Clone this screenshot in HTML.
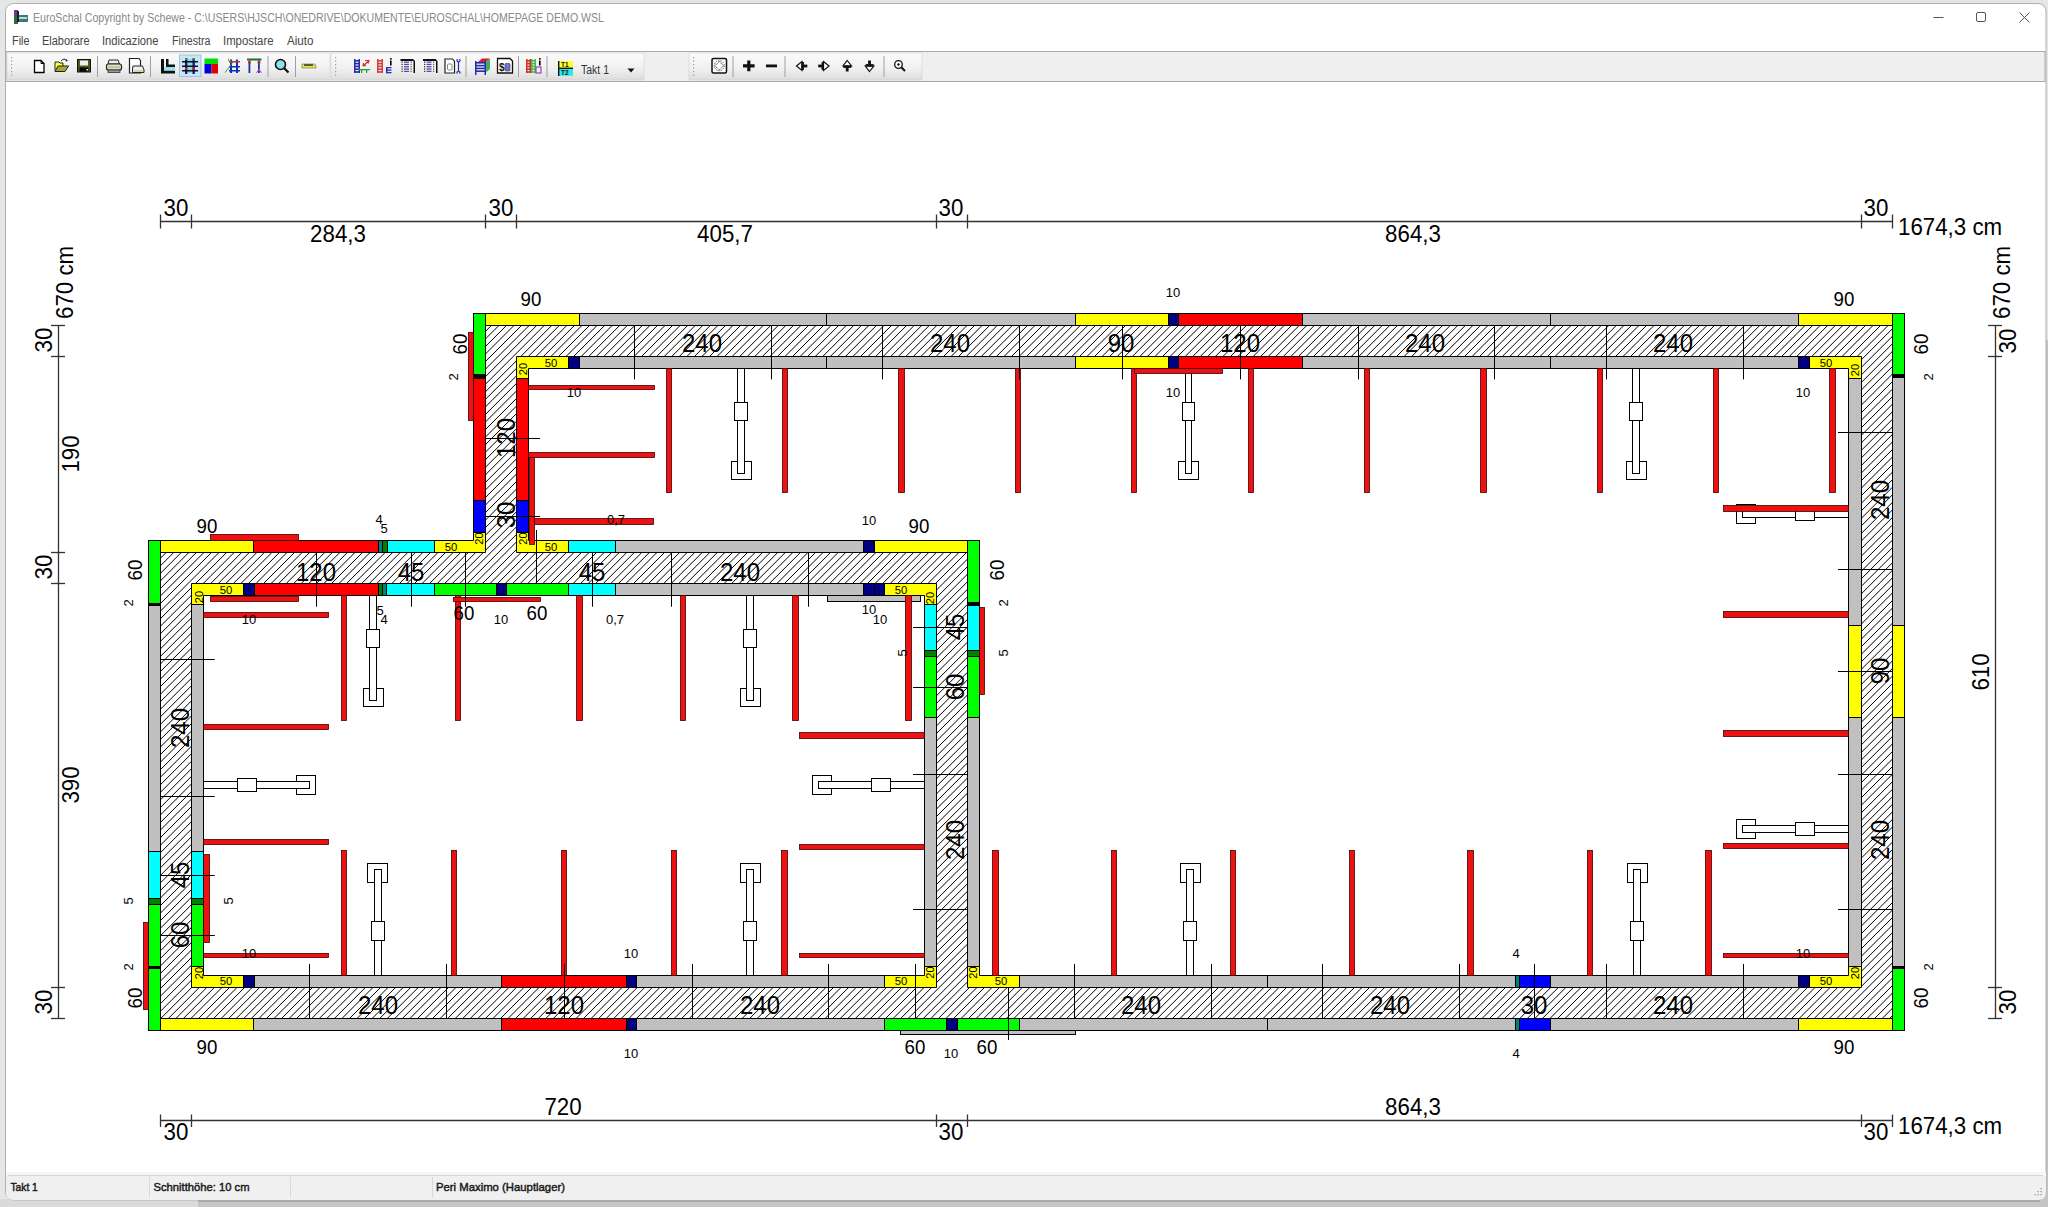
<!DOCTYPE html>
<html><head><meta charset="utf-8"><style>
html,body{margin:0;padding:0;background:#e6e6e6;overflow:hidden;}
svg{display:block;font-family:"Liberation Sans",sans-serif;}
</style></head><body>
<svg width="2048" height="1207" viewBox="0 0 2048 1207">
<defs><pattern id="hatch" patternUnits="userSpaceOnUse" x="1.43" y="0" width="7.55" height="7.55"><rect width="7.55" height="7.55" fill="#fff"/><path d="M-1,8.55 L8.55,-1 M-1,1 L1,-1 M6.55,8.55 L8.55,6.55" stroke="#000" stroke-width="1.05"/></pattern></defs>
<rect x="0" y="0" width="2048" height="1207" fill="#e6e6e6"/><rect x="0" y="1199" width="198" height="8" fill="#dadada"/><rect x="198" y="1199" width="1850" height="8" fill="#c6c6c6"/><rect x="198" y="1200" width="1850" height="2" fill="#a9a9a9"/><rect x="2040" y="340" width="8" height="867" fill="#c4c4c4"/><rect x="5.5" y="3.5" width="2040.5" height="1196.5" rx="8" fill="#ffffff" stroke="#b0b0b0" stroke-width="1"/><rect x="14" y="10" width="4" height="14" fill="#6a3d7a"/><rect x="14" y="16" width="4" height="8" fill="#2e6b3a"/><rect x="18" y="15" width="10" height="7" fill="#3a7a7a"/><rect x="19" y="17" width="8" height="2" fill="#c0d8d8"/><rect x="17" y="11" width="2" height="11" fill="#1a1a3a"/><text x="33" y="21.5" font-size="12.2" fill="#8a8a8a" textLength="571" lengthAdjust="spacingAndGlyphs">EuroSchal Copyright by Schewe - C:\USERS\HJSCH\ONEDRIVE\DOKUMENTE\EUROSCHAL\HOMEPAGE DEMO.WSL</text><line x1="1933.5" y1="17.5" x2="1943.5" y2="17.5" stroke="#555" stroke-width="1"/><rect x="1976.5" y="12.5" width="9" height="9" rx="1.5" fill="none" stroke="#555" stroke-width="1"/><path d="M2019.5,12.5 L2029.5,22.5 M2029.5,12.5 L2019.5,22.5" stroke="#555" stroke-width="1"/><text x="12" y="45" font-size="12" fill="#444" textLength="17.5" lengthAdjust="spacingAndGlyphs">File</text><text x="42" y="45" font-size="12" fill="#444" textLength="47.5" lengthAdjust="spacingAndGlyphs">Elaborare</text><text x="102" y="45" font-size="12" fill="#444" textLength="56.5" lengthAdjust="spacingAndGlyphs">Indicazione</text><text x="172" y="45" font-size="12" fill="#444" textLength="38.5" lengthAdjust="spacingAndGlyphs">Finestra</text><text x="223" y="45" font-size="12" fill="#444" textLength="50.5" lengthAdjust="spacingAndGlyphs">Impostare</text><text x="287" y="45" font-size="12" fill="#444" textLength="26.5" lengthAdjust="spacingAndGlyphs">Aiuto</text><rect x="6" y="51.5" width="2039" height="30" fill="#efefef" stroke="#a9a9a9" stroke-width="1"/><defs><linearGradient id="tbg" x1="0" y1="0" x2="0" y2="1"><stop offset="0" stop-color="#fbfbfb"/><stop offset="0.6" stop-color="#f0f0f0"/><stop offset="1" stop-color="#dcdcdc"/></linearGradient></defs><rect x="7" y="53" width="323" height="27" fill="url(#tbg)" stroke="#d0d0d0" stroke-width="0.6"/><rect x="11" y="57.0" width="1.2" height="1.2" fill="#9a9a9a"/><rect x="11" y="60.5" width="1.2" height="1.2" fill="#9a9a9a"/><rect x="11" y="64.0" width="1.2" height="1.2" fill="#9a9a9a"/><rect x="11" y="67.5" width="1.2" height="1.2" fill="#9a9a9a"/><rect x="11" y="71.0" width="1.2" height="1.2" fill="#9a9a9a"/><rect x="11" y="74.5" width="1.2" height="1.2" fill="#9a9a9a"/><rect x="331" y="53" width="313" height="27" fill="url(#tbg)" stroke="#d0d0d0" stroke-width="0.6"/><rect x="335" y="57.0" width="1.2" height="1.2" fill="#9a9a9a"/><rect x="335" y="60.5" width="1.2" height="1.2" fill="#9a9a9a"/><rect x="335" y="64.0" width="1.2" height="1.2" fill="#9a9a9a"/><rect x="335" y="67.5" width="1.2" height="1.2" fill="#9a9a9a"/><rect x="335" y="71.0" width="1.2" height="1.2" fill="#9a9a9a"/><rect x="335" y="74.5" width="1.2" height="1.2" fill="#9a9a9a"/><rect x="689" y="53" width="233" height="27" fill="url(#tbg)" stroke="#d0d0d0" stroke-width="0.6"/><rect x="693" y="57.0" width="1.2" height="1.2" fill="#9a9a9a"/><rect x="693" y="60.5" width="1.2" height="1.2" fill="#9a9a9a"/><rect x="693" y="64.0" width="1.2" height="1.2" fill="#9a9a9a"/><rect x="693" y="67.5" width="1.2" height="1.2" fill="#9a9a9a"/><rect x="693" y="71.0" width="1.2" height="1.2" fill="#9a9a9a"/><rect x="693" y="74.5" width="1.2" height="1.2" fill="#9a9a9a"/><line x1="97.5" y1="56" x2="97.5" y2="77" stroke="#a0a0a0" stroke-width="1"/><line x1="150.5" y1="56" x2="150.5" y2="77" stroke="#a0a0a0" stroke-width="1"/><line x1="268" y1="56" x2="268" y2="77" stroke="#a0a0a0" stroke-width="1"/><line x1="295.5" y1="56" x2="295.5" y2="77" stroke="#a0a0a0" stroke-width="1"/><line x1="466" y1="56" x2="466" y2="77" stroke="#a0a0a0" stroke-width="1"/><line x1="518.5" y1="56" x2="518.5" y2="77" stroke="#a0a0a0" stroke-width="1"/><line x1="547" y1="56" x2="547" y2="77" stroke="#a0a0a0" stroke-width="1"/><line x1="733" y1="56" x2="733" y2="77" stroke="#a0a0a0" stroke-width="1"/><line x1="785" y1="56" x2="785" y2="77" stroke="#a0a0a0" stroke-width="1"/><line x1="884" y1="56" x2="884" y2="77" stroke="#a0a0a0" stroke-width="1"/><rect x="179.5" y="55" width="21.5" height="21.5" fill="#cce4f7" stroke="#99c2e6" stroke-width="1"/><path d="M34.5,60.5 H41 L44,63.5 V72.5 H34.5 Z" fill="#fff" stroke="#000" stroke-width="1.3"/><path d="M41,60.5 V63.5 H44" fill="none" stroke="#000" stroke-width="1"/><path d="M55,62 H59 L60,63 H63 V70.5 H55 Z" fill="#ffff40" stroke="#222" stroke-width="1"/><path d="M55,71.5 L58,66 H68.5 L65,71.5 Z" fill="#a8a830" stroke="#222" stroke-width="1"/><path d="M61,61 Q64,57.5 67,60.5" fill="none" stroke="#222" stroke-width="1"/><path d="M66,59 L68,61 L65.5,61.5Z" fill="#222"/><rect x="77.5" y="59.5" width="13" height="12.5" fill="#555520" stroke="#111" stroke-width="1"/><rect x="80" y="60.5" width="8" height="5" fill="#eee"/><rect x="79.5" y="67.5" width="9" height="4" fill="#000"/><rect x="86.5" y="69" width="1.5" height="1.5" fill="#fff"/><path d="M109,60 H118 L119.5,64 H108Z" fill="#eee" stroke="#222" stroke-width="1"/><rect x="106.5" y="64" width="15" height="6" rx="2" fill="#ddd" stroke="#222" stroke-width="1.2"/><rect x="108" y="66.5" width="12" height="1.2" fill="#b8c040"/><rect x="108" y="70" width="12" height="2.5" fill="#999" stroke="#333" stroke-width="0.8"/><path d="M129.5,58.5 H139 L140.5,60.5 V73 H129.5 Z" fill="#fff" stroke="#222" stroke-width="1.2"/><path d="M133,66 H142.5 L144,70 V72.5 H132.5 V69 Z" fill="#eee" stroke="#222" stroke-width="1"/><rect x="134" y="70.5" width="9" height="1" fill="#c0c040"/><path d="M161,59 H164 V70.5 H175 V73.5 H161Z" fill="#111"/><path d="M164,67 H175 V70.5 H164Z" fill="#8ee8ee"/><path d="M166,59 H168.5 V64.5 H175 V67 H166Z" fill="#111"/><rect x="186" y="59" width="9" height="14" fill="#8fd8e8"/><rect x="185" y="58" width="2.3" height="16" fill="#0a1a8a"/><rect x="192.5" y="58" width="2.3" height="16" fill="#0a1a8a"/><rect x="182" y="61" width="16" height="1.5" fill="#111"/><rect x="182" y="65.5" width="16" height="1.5" fill="#111"/><rect x="182" y="70" width="16" height="1.5" fill="#111"/><rect x="185" y="58" width="2.3" height="2" fill="#2a2"/><rect x="192.5" y="58" width="2.3" height="2" fill="#2a2"/><rect x="185" y="67.5" width="2.3" height="2" fill="#c22"/><rect x="192.5" y="67.5" width="2.3" height="2" fill="#c22"/><rect x="204.5" y="58.5" width="13.5" height="5.5" fill="#00e000"/><rect x="204.5" y="64" width="7" height="9.5" fill="#0000e0"/><rect x="211.5" y="64" width="6.5" height="9.5" fill="#e00000"/><rect x="230" y="59.5" width="2" height="13.5" fill="#1030b0"/><rect x="236" y="59.5" width="2" height="13.5" fill="#1030b0"/><rect x="229" y="61" width="11" height="1.5" fill="#c03030"/><rect x="229" y="66" width="11" height="1.5" fill="#1030b0"/><rect x="229" y="70" width="11" height="1.5" fill="#1030b0"/><path d="M225,72.5 L233,62" stroke="#40a040" stroke-width="1"/><path d="M228.5,58.5 V61 H231" fill="none" stroke="#40c040" stroke-width="0.9"/><rect x="247" y="58.5" width="14.5" height="2" fill="#207020"/><rect x="248.5" y="60.5" width="1.8" height="12.5" fill="#2030a0"/><rect x="258" y="60.5" width="1.8" height="12.5" fill="#2030a0"/><rect x="248" y="61.5" width="3" height="2" fill="#c03040"/><rect x="257.5" y="61.5" width="3" height="2" fill="#c03040"/><path d="M256.5,73 L259,69 L261.5,73" fill="none" stroke="#c050d0" stroke-width="1"/><circle cx="280.5" cy="64.5" r="5" fill="#90e0e8" stroke="#111" stroke-width="1.6"/><path d="M284,68 L288.5,72.5" stroke="#111" stroke-width="2.2"/><path d="M302,64 H315 L316,66.5 V68 H302Z" fill="#e8e840" stroke="#666" stroke-width="0.6"/><rect x="304" y="64.3" width="9" height="1.5" fill="#333"/><rect x="354" y="59" width="1.5" height="14" fill="#2a2ab0"/><rect x="358.5" y="59" width="1.5" height="14" fill="#2a2ab0"/><rect x="354" y="60.0" width="6" height="1.6" fill="#2a2ab0"/><rect x="354" y="62.8" width="6" height="1.6" fill="#2a2ab0"/><rect x="354" y="65.6" width="6" height="1.6" fill="#2a2ab0"/><rect x="354" y="68.4" width="6" height="1.6" fill="#2a2ab0"/><rect x="354" y="71.2" width="6" height="1.6" fill="#2a2ab0"/><path d="M363,66 L369,60.5 M365,60.5 L369,60.5 L368,63.5 M363,66 L363.5,63 M363,66 L366,65.5" stroke="#d03030" stroke-width="1.2" fill="none"/><rect x="358" y="69" width="12" height="1.3" fill="#30a030"/><rect x="361" y="69" width="1.3" height="4" fill="#30a030"/><rect x="366" y="69" width="1.3" height="4" fill="#30a030"/><rect x="377" y="59" width="1.5" height="14" fill="#d04040"/><rect x="381.5" y="59" width="1.5" height="14" fill="#d04040"/><rect x="377" y="60.0" width="6" height="1.6" fill="#d04040"/><rect x="377" y="62.8" width="6" height="1.6" fill="#d04040"/><rect x="377" y="65.6" width="6" height="1.6" fill="#d04040"/><rect x="377" y="68.4" width="6" height="1.6" fill="#d04040"/><rect x="377" y="71.2" width="6" height="1.6" fill="#d04040"/><rect x="386" y="67" width="1.5" height="6" fill="#2030b0"/><rect x="386" y="67" width="5.5" height="1.3" fill="#2030b0"/><rect x="386" y="69.5" width="5.5" height="1.3" fill="#2030b0"/><rect x="386" y="72" width="5.5" height="1.3" fill="#2030b0"/><rect x="390" y="58" width="1.6" height="1.6" fill="#000"/><rect x="390" y="60.5" width="1.6" height="5" fill="#000"/><path d="M400.5,59 H413.0 L415.0,61 V73 H413.5 V61 H400.5Z" fill="#111"/><rect x="400.5" y="59.5" width="13" height="13.5" fill="#fff" opacity="0"/><rect x="401.5" y="61.5" width="1.2" height="1.2" fill="#223"/><rect x="404.0" y="61.5" width="5" height="1.3" fill="#5050a0"/><rect x="410.5" y="61.5" width="1.2" height="1.2" fill="#556"/><rect x="401.5" y="63.8" width="1.2" height="1.2" fill="#223"/><rect x="404.0" y="63.8" width="5" height="1.3" fill="#5050a0"/><rect x="410.5" y="63.8" width="1.2" height="1.2" fill="#556"/><rect x="401.5" y="66.1" width="1.2" height="1.2" fill="#223"/><rect x="404.0" y="66.1" width="5" height="1.3" fill="#5050a0"/><rect x="410.5" y="66.1" width="1.2" height="1.2" fill="#556"/><rect x="401.5" y="68.4" width="1.2" height="1.2" fill="#223"/><rect x="404.0" y="68.4" width="5" height="1.3" fill="#5050a0"/><rect x="410.5" y="68.4" width="1.2" height="1.2" fill="#556"/><rect x="401.5" y="70.7" width="1.2" height="1.2" fill="#223"/><rect x="404.0" y="70.7" width="5" height="1.3" fill="#5050a0"/><rect x="410.5" y="70.7" width="1.2" height="1.2" fill="#556"/><path d="M423,59 H435.5 L437.5,61 V73 H436 V61 H423Z" fill="#111"/><rect x="423" y="59.5" width="13" height="13.5" fill="#fff" opacity="0"/><rect x="424" y="61.5" width="1.2" height="1.2" fill="#223"/><rect x="426.5" y="61.5" width="5" height="1.3" fill="#5050a0"/><rect x="433" y="61.5" width="1.2" height="1.2" fill="#556"/><rect x="424" y="63.8" width="1.2" height="1.2" fill="#223"/><rect x="426.5" y="63.8" width="5" height="1.3" fill="#5050a0"/><rect x="433" y="63.8" width="1.2" height="1.2" fill="#556"/><rect x="424" y="66.1" width="1.2" height="1.2" fill="#223"/><rect x="426.5" y="66.1" width="5" height="1.3" fill="#5050a0"/><rect x="433" y="66.1" width="1.2" height="1.2" fill="#556"/><rect x="424" y="68.4" width="1.2" height="1.2" fill="#223"/><rect x="426.5" y="68.4" width="5" height="1.3" fill="#5050a0"/><rect x="433" y="68.4" width="1.2" height="1.2" fill="#556"/><rect x="424" y="70.7" width="1.2" height="1.2" fill="#223"/><rect x="426.5" y="70.7" width="5" height="1.3" fill="#5050a0"/><rect x="433" y="70.7" width="1.2" height="1.2" fill="#556"/><path d="M445,59 H452.5 L454.5,61.5 V73 H445Z" fill="#fff" stroke="#222" stroke-width="1.2"/><rect x="447.5" y="64" width="4.5" height="6" rx="1" fill="none" stroke="#888" stroke-width="1"/><path d="M457.5,59 Q456,61 458.5,62 V71 Q456,72 457.5,73.5 M459.5,59 Q461,61 458.5,62 M458.5,71 Q461,72 459.5,73.5" stroke="#2030b0" stroke-width="1.2" fill="none"/><path d="M478,62 L482,58.5 H490 L486,62Z" fill="#d02030"/><path d="M486,62 L490,58.5 V69 L486,72.5Z" fill="#40b060"/><rect x="475" y="61" width="1.5" height="14" fill="#2a2ab0"/><rect x="484.5" y="61" width="1.5" height="14" fill="#2a2ab0"/><rect x="475" y="62.0" width="11" height="1.6" fill="#2a2ab0"/><rect x="475" y="64.8" width="11" height="1.6" fill="#2a2ab0"/><rect x="475" y="67.6" width="11" height="1.6" fill="#2a2ab0"/><rect x="475" y="70.4" width="11" height="1.6" fill="#2a2ab0"/><path d="M497.5,58.5 H510 L512.5,61 V73 H497.5Z" fill="#fff" stroke="#111" stroke-width="1.3"/><text x="499" y="70.5" font-size="10" font-weight="bold" fill="#111">$</text><rect x="505" y="63.5" width="5" height="7.5" rx="1" fill="#8070d0" stroke="#333" stroke-width="0.6"/><rect x="526" y="59" width="1.5" height="14" fill="#d03030"/><rect x="529.5" y="59" width="1.5" height="14" fill="#d03030"/><rect x="526" y="60.0" width="5" height="1.6" fill="#d03030"/><rect x="526" y="62.8" width="5" height="1.6" fill="#d03030"/><rect x="526" y="65.6" width="5" height="1.6" fill="#d03030"/><rect x="526" y="68.4" width="5" height="1.6" fill="#d03030"/><rect x="526" y="71.2" width="5" height="1.6" fill="#d03030"/><rect x="531" y="59" width="1.5" height="14" fill="#40c040"/><rect x="534.5" y="59" width="1.5" height="14" fill="#40c040"/><rect x="531" y="60.0" width="5" height="1.6" fill="#40c040"/><rect x="531" y="62.8" width="5" height="1.6" fill="#40c040"/><rect x="531" y="65.6" width="5" height="1.6" fill="#40c040"/><rect x="531" y="68.4" width="5" height="1.6" fill="#40c040"/><rect x="531" y="71.2" width="5" height="1.6" fill="#40c040"/><rect x="536" y="67" width="5" height="6" fill="none" stroke="#a040c0" stroke-width="1.2"/><rect x="539" y="58" width="1.6" height="1.6" fill="#000"/><rect x="539" y="60.5" width="1.6" height="5" fill="#000"/><rect x="558" y="61" width="15" height="7.3" fill="#ffff30"/><rect x="558" y="68.3" width="15" height="7.5" fill="#30e8e8"/><rect x="558" y="67.6" width="15" height="1.4" fill="#111"/><rect x="558" y="61" width="1.4" height="15" fill="#111"/><text x="561" y="67" font-size="6.5" font-weight="bold" fill="#111">T1</text><text x="561" y="75" font-size="6.5" font-weight="bold" fill="#111">T2</text><text x="581" y="73.5" font-size="12.5" fill="#333" textLength="28" lengthAdjust="spacingAndGlyphs">Takt 1</text><path d="M627.5,68.5 H634.5 L631,72.5Z" fill="#111"/><rect x="712" y="58.5" width="14.5" height="14.5" rx="1.5" fill="#fff" stroke="#111" stroke-width="1.5"/><circle cx="719.25" cy="65.75" r="5" fill="none" stroke="#333" stroke-width="0.8" stroke-dasharray="1.4,1"/><path d="M719.25,61.5 L723.5,65.75 L719.25,70 L715,65.75Z" fill="none" stroke="#222" stroke-width="0.9" stroke-dasharray="1.2,0.9"/><path d="M747.2,60.5 H750.4 V64.3 H754.6 V67.4 H750.4 V71.2 H747.2 V67.4 H743 V64.3 H747.2Z" fill="#111"/><rect x="766" y="64.5" width="11" height="2.8" fill="#111"/><path d="M796.5,66 L802,61.5 V70.5Z" fill="#fff" stroke="#111" stroke-width="1.2"/><rect x="801.5" y="62" width="2.4" height="8" fill="#111"/><rect x="801.5" y="64.6" width="5.8" height="2.8" fill="#111"/><path d="M829,66 L823.5,61.5 V70.5Z" fill="#fff" stroke="#111" stroke-width="1.2"/><rect x="821.6" y="62" width="2.4" height="8" fill="#111"/><rect x="818.2" y="64.6" width="5.8" height="2.8" fill="#111"/><path d="M847.2,60.5 L851.5,66 H843Z" fill="#fff" stroke="#111" stroke-width="1.2"/><rect x="843.3" y="65.5" width="8" height="2.4" fill="#111"/><rect x="845.8" y="65.5" width="2.8" height="6" fill="#111"/><path d="M869.5,71.5 L873.8,66 H865.3Z" fill="#fff" stroke="#111" stroke-width="1.2"/><rect x="865.6" y="64.1" width="8" height="2.4" fill="#111"/><rect x="868.1" y="60.5" width="2.8" height="6" fill="#111"/><circle cx="898.5" cy="64.5" r="3.8" fill="#fff" stroke="#111" stroke-width="1.3"/><circle cx="898.5" cy="64.5" r="1.2" fill="#111"/><path d="M901.3,67.3 L905,71" stroke="#111" stroke-width="2"/><rect x="6" y="1172" width="2040" height="4" fill="#f6f6f6"/><path d="M6,1176 H2046 V1192 Q2046,1200 2038,1200 H14 Q6,1200 6,1192 Z" fill="#f0f0f0"/><line x1="8" y1="1175.5" x2="2043" y2="1175.5" stroke="#d6d6d6" stroke-width="1"/><line x1="149.5" y1="1177" x2="149.5" y2="1198" stroke="#dadada" stroke-width="1"/><line x1="290.5" y1="1177" x2="290.5" y2="1198" stroke="#dadada" stroke-width="1"/><line x1="432.5" y1="1177" x2="432.5" y2="1198" stroke="#dadada" stroke-width="1"/><text x="10.5" y="1191" font-size="11.5" fill="#1a1a1a" stroke="#1a1a1a" stroke-width="0.45" textLength="27.299999999999997" lengthAdjust="spacingAndGlyphs">Takt 1</text><text x="153.5" y="1191" font-size="11.5" fill="#1a1a1a" stroke="#1a1a1a" stroke-width="0.45" textLength="96.0" lengthAdjust="spacingAndGlyphs">Schnitthöhe: 10 cm</text><text x="436" y="1191" font-size="11.5" fill="#1a1a1a" stroke="#1a1a1a" stroke-width="0.45" textLength="129" lengthAdjust="spacingAndGlyphs">Peri Maximo (Hauptlager)</text><rect x="2040.5" y="1188" width="1.2" height="1.2" fill="#888"/><rect x="2037.5" y="1191" width="1.2" height="1.2" fill="#888"/><rect x="2040.5" y="1191" width="1.2" height="1.2" fill="#888"/><rect x="2034.5" y="1194" width="1.2" height="1.2" fill="#888"/><rect x="2037.5" y="1194" width="1.2" height="1.2" fill="#888"/><rect x="2040.5" y="1194" width="1.2" height="1.2" fill="#888"/>
<g>
<defs><clipPath id="wclip"><path d="M485.1,325H1892V356.2H485.1ZM1861,325H1892V1018H1861ZM160.4,987H1892V1018H160.4ZM160.4,552.6H191.3V1018H160.4ZM160.4,552.6H967V583.6H160.4ZM485.1,325H516.2V583.6H485.1ZM936,552.6H967V1018H936Z"/></clipPath></defs>
<path d="M485.1,325H1892V356.2H485.1ZM1861,325H1892V1018H1861ZM160.4,987H1892V1018H160.4ZM160.4,552.6H191.3V1018H160.4ZM160.4,552.6H967V583.6H160.4ZM485.1,325H516.2V583.6H485.1ZM936,552.6H967V1018H936Z" fill="#fff"/>
<path d="M-618.22,1050L131.78,300M-610.67,1050L139.33,300M-603.12,1050L146.88,300M-595.57,1050L154.43,300M-588.02,1050L161.98,300M-580.47,1050L169.53,300M-572.92,1050L177.08,300M-565.37,1050L184.63,300M-557.82,1050L192.18,300M-550.27,1050L199.73,300M-542.72,1050L207.28,300M-535.17,1050L214.83,300M-527.62,1050L222.38,300M-520.07,1050L229.93,300M-512.52,1050L237.48,300M-504.97,1050L245.03,300M-497.42,1050L252.58,300M-489.87,1050L260.13,300M-482.32,1050L267.68,300M-474.77,1050L275.23,300M-467.22,1050L282.78,300M-459.67,1050L290.33,300M-452.12,1050L297.88,300M-444.57,1050L305.43,300M-437.02,1050L312.98,300M-429.47,1050L320.53,300M-421.92,1050L328.08,300M-414.37,1050L335.63,300M-406.82,1050L343.18,300M-399.27,1050L350.73,300M-391.72,1050L358.28,300M-384.17,1050L365.83,300M-376.62,1050L373.38,300M-369.07,1050L380.93,300M-361.52,1050L388.48,300M-353.97,1050L396.03,300M-346.42,1050L403.58,300M-338.87,1050L411.13,300M-331.32,1050L418.68,300M-323.77,1050L426.23,300M-316.22,1050L433.78,300M-308.67,1050L441.33,300M-301.12,1050L448.88,300M-293.57,1050L456.43,300M-286.02,1050L463.98,300M-278.47,1050L471.53,300M-270.92,1050L479.08,300M-263.37,1050L486.63,300M-255.82,1050L494.18,300M-248.27,1050L501.73,300M-240.72,1050L509.28,300M-233.17,1050L516.83,300M-225.62,1050L524.38,300M-218.07,1050L531.93,300M-210.52,1050L539.48,300M-202.97,1050L547.03,300M-195.42,1050L554.58,300M-187.87,1050L562.13,300M-180.32,1050L569.68,300M-172.77,1050L577.23,300M-165.22,1050L584.78,300M-157.67,1050L592.33,300M-150.12,1050L599.88,300M-142.57,1050L607.43,300M-135.02,1050L614.98,300M-127.47,1050L622.53,300M-119.92,1050L630.08,300M-112.37,1050L637.63,300M-104.82,1050L645.18,300M-97.27,1050L652.73,300M-89.72,1050L660.28,300M-82.17,1050L667.83,300M-74.62,1050L675.38,300M-67.07,1050L682.93,300M-59.52,1050L690.48,300M-51.97,1050L698.03,300M-44.42,1050L705.58,300M-36.87,1050L713.13,300M-29.32,1050L720.68,300M-21.77,1050L728.23,300M-14.22,1050L735.78,300M-6.67,1050L743.33,300M0.88,1050L750.88,300M8.43,1050L758.43,300M15.98,1050L765.98,300M23.53,1050L773.53,300M31.08,1050L781.08,300M38.63,1050L788.63,300M46.18,1050L796.18,300M53.73,1050L803.73,300M61.28,1050L811.28,300M68.83,1050L818.83,300M76.38,1050L826.38,300M83.93,1050L833.93,300M91.48,1050L841.48,300M99.03,1050L849.03,300M106.58,1050L856.58,300M114.13,1050L864.13,300M121.68,1050L871.68,300M129.23,1050L879.23,300M136.78,1050L886.78,300M144.33,1050L894.33,300M151.88,1050L901.88,300M159.43,1050L909.43,300M166.98,1050L916.98,300M174.53,1050L924.53,300M182.08,1050L932.08,300M189.63,1050L939.63,300M197.18,1050L947.18,300M204.73,1050L954.73,300M212.28,1050L962.28,300M219.83,1050L969.83,300M227.38,1050L977.38,300M234.93,1050L984.93,300M242.48,1050L992.48,300M250.03,1050L1000.03,300M257.58,1050L1007.58,300M265.13,1050L1015.13,300M272.68,1050L1022.68,300M280.23,1050L1030.23,300M287.78,1050L1037.78,300M295.33,1050L1045.33,300M302.88,1050L1052.88,300M310.43,1050L1060.43,300M317.98,1050L1067.98,300M325.53,1050L1075.53,300M333.08,1050L1083.08,300M340.63,1050L1090.63,300M348.18,1050L1098.18,300M355.73,1050L1105.73,300M363.28,1050L1113.28,300M370.83,1050L1120.83,300M378.38,1050L1128.38,300M385.93,1050L1135.93,300M393.48,1050L1143.48,300M401.03,1050L1151.03,300M408.58,1050L1158.58,300M416.13,1050L1166.13,300M423.68,1050L1173.68,300M431.23,1050L1181.23,300M438.78,1050L1188.78,300M446.33,1050L1196.33,300M453.88,1050L1203.88,300M461.43,1050L1211.43,300M468.98,1050L1218.98,300M476.53,1050L1226.53,300M484.08,1050L1234.08,300M491.63,1050L1241.63,300M499.18,1050L1249.18,300M506.73,1050L1256.73,300M514.28,1050L1264.28,300M521.83,1050L1271.83,300M529.38,1050L1279.38,300M536.93,1050L1286.93,300M544.48,1050L1294.48,300M552.03,1050L1302.03,300M559.58,1050L1309.58,300M567.13,1050L1317.13,300M574.68,1050L1324.68,300M582.23,1050L1332.23,300M589.78,1050L1339.78,300M597.33,1050L1347.33,300M604.88,1050L1354.88,300M612.43,1050L1362.43,300M619.98,1050L1369.98,300M627.53,1050L1377.53,300M635.08,1050L1385.08,300M642.63,1050L1392.63,300M650.18,1050L1400.18,300M657.73,1050L1407.73,300M665.28,1050L1415.28,300M672.83,1050L1422.83,300M680.38,1050L1430.38,300M687.93,1050L1437.93,300M695.48,1050L1445.48,300M703.03,1050L1453.03,300M710.58,1050L1460.58,300M718.13,1050L1468.13,300M725.68,1050L1475.68,300M733.23,1050L1483.23,300M740.78,1050L1490.78,300M748.33,1050L1498.33,300M755.88,1050L1505.88,300M763.43,1050L1513.43,300M770.98,1050L1520.98,300M778.53,1050L1528.53,300M786.08,1050L1536.08,300M793.63,1050L1543.63,300M801.18,1050L1551.18,300M808.73,1050L1558.73,300M816.28,1050L1566.28,300M823.83,1050L1573.83,300M831.38,1050L1581.38,300M838.93,1050L1588.93,300M846.48,1050L1596.48,300M854.03,1050L1604.03,300M861.58,1050L1611.58,300M869.13,1050L1619.13,300M876.68,1050L1626.68,300M884.23,1050L1634.23,300M891.78,1050L1641.78,300M899.33,1050L1649.33,300M906.88,1050L1656.88,300M914.43,1050L1664.43,300M921.98,1050L1671.98,300M929.53,1050L1679.53,300M937.08,1050L1687.08,300M944.63,1050L1694.63,300M952.18,1050L1702.18,300M959.73,1050L1709.73,300M967.28,1050L1717.28,300M974.83,1050L1724.83,300M982.38,1050L1732.38,300M989.93,1050L1739.93,300M997.48,1050L1747.48,300M1005.03,1050L1755.03,300M1012.58,1050L1762.58,300M1020.13,1050L1770.13,300M1027.68,1050L1777.68,300M1035.23,1050L1785.23,300M1042.78,1050L1792.78,300M1050.33,1050L1800.33,300M1057.88,1050L1807.88,300M1065.43,1050L1815.43,300M1072.98,1050L1822.98,300M1080.53,1050L1830.53,300M1088.08,1050L1838.08,300M1095.63,1050L1845.63,300M1103.18,1050L1853.18,300M1110.73,1050L1860.73,300M1118.28,1050L1868.28,300M1125.83,1050L1875.83,300M1133.38,1050L1883.38,300M1140.93,1050L1890.93,300M1148.48,1050L1898.48,300M1156.03,1050L1906.03,300M1163.58,1050L1913.58,300M1171.13,1050L1921.13,300M1178.68,1050L1928.68,300M1186.23,1050L1936.23,300M1193.78,1050L1943.78,300M1201.33,1050L1951.33,300M1208.88,1050L1958.88,300M1216.43,1050L1966.43,300M1223.98,1050L1973.98,300M1231.53,1050L1981.53,300M1239.08,1050L1989.08,300M1246.63,1050L1996.63,300M1254.18,1050L2004.18,300M1261.73,1050L2011.73,300M1269.28,1050L2019.28,300M1276.83,1050L2026.83,300M1284.38,1050L2034.38,300M1291.93,1050L2041.93,300M1299.48,1050L2049.48,300M1307.03,1050L2057.03,300M1314.58,1050L2064.58,300M1322.13,1050L2072.13,300M1329.68,1050L2079.68,300M1337.23,1050L2087.23,300M1344.78,1050L2094.78,300M1352.33,1050L2102.33,300M1359.88,1050L2109.88,300M1367.43,1050L2117.43,300M1374.98,1050L2124.98,300M1382.53,1050L2132.53,300M1390.08,1050L2140.08,300M1397.63,1050L2147.63,300M1405.18,1050L2155.18,300M1412.73,1050L2162.73,300M1420.28,1050L2170.28,300M1427.83,1050L2177.83,300M1435.38,1050L2185.38,300M1442.93,1050L2192.93,300M1450.48,1050L2200.48,300M1458.03,1050L2208.03,300M1465.58,1050L2215.58,300M1473.13,1050L2223.13,300M1480.68,1050L2230.68,300M1488.23,1050L2238.23,300M1495.78,1050L2245.78,300M1503.33,1050L2253.33,300M1510.88,1050L2260.88,300M1518.43,1050L2268.43,300M1525.98,1050L2275.98,300M1533.53,1050L2283.53,300M1541.08,1050L2291.08,300M1548.63,1050L2298.63,300M1556.18,1050L2306.18,300M1563.73,1050L2313.73,300M1571.28,1050L2321.28,300M1578.83,1050L2328.83,300M1586.38,1050L2336.38,300M1593.93,1050L2343.93,300M1601.48,1050L2351.48,300M1609.03,1050L2359.03,300M1616.58,1050L2366.58,300M1624.13,1050L2374.13,300M1631.68,1050L2381.68,300M1639.23,1050L2389.23,300M1646.78,1050L2396.78,300M1654.33,1050L2404.33,300M1661.88,1050L2411.88,300M1669.43,1050L2419.43,300M1676.98,1050L2426.98,300M1684.53,1050L2434.53,300M1692.08,1050L2442.08,300M1699.63,1050L2449.63,300M1707.18,1050L2457.18,300M1714.73,1050L2464.73,300M1722.28,1050L2472.28,300M1729.83,1050L2479.83,300M1737.38,1050L2487.38,300M1744.93,1050L2494.93,300M1752.48,1050L2502.48,300M1760.03,1050L2510.03,300M1767.58,1050L2517.58,300M1775.13,1050L2525.13,300M1782.68,1050L2532.68,300M1790.23,1050L2540.23,300M1797.78,1050L2547.78,300M1805.33,1050L2555.33,300M1812.88,1050L2562.88,300M1820.43,1050L2570.43,300M1827.98,1050L2577.98,300M1835.53,1050L2585.53,300M1843.08,1050L2593.08,300M1850.63,1050L2600.63,300M1858.18,1050L2608.18,300M1865.73,1050L2615.73,300M1873.28,1050L2623.28,300M1880.83,1050L2630.83,300M1888.38,1050L2638.38,300M1895.93,1050L2645.93,300M1903.48,1050L2653.48,300" stroke="#000" stroke-width="1.0" clip-path="url(#wclip)"/>
<line x1="160.4" y1="221.5" x2="1892.0" y2="221.5" stroke="#333" stroke-width="1.3"/>
<line x1="160.5" y1="214.5" x2="160.5" y2="228.5" stroke="#333" stroke-width="1.3"/>
<line x1="191.5" y1="214.5" x2="191.5" y2="228.5" stroke="#333" stroke-width="1.3"/>
<line x1="485.5" y1="214.5" x2="485.5" y2="228.5" stroke="#333" stroke-width="1.3"/>
<line x1="516.5" y1="214.5" x2="516.5" y2="228.5" stroke="#333" stroke-width="1.3"/>
<line x1="936.5" y1="214.5" x2="936.5" y2="228.5" stroke="#333" stroke-width="1.3"/>
<line x1="967.5" y1="214.5" x2="967.5" y2="228.5" stroke="#333" stroke-width="1.3"/>
<line x1="1861.5" y1="214.5" x2="1861.5" y2="228.5" stroke="#333" stroke-width="1.3"/>
<line x1="1892.5" y1="214.5" x2="1892.5" y2="228.5" stroke="#333" stroke-width="1.3"/>
<text x="0" y="7.92" font-size="22.3" text-anchor="middle" fill="#000" transform="translate(176.0,208.0) scale(1,1.05)">30</text>
<text x="0" y="7.92" font-size="22.3" text-anchor="middle" fill="#000" transform="translate(501.0,208.0) scale(1,1.05)">30</text>
<text x="0" y="7.92" font-size="22.3" text-anchor="middle" fill="#000" transform="translate(951.0,208.0) scale(1,1.05)">30</text>
<text x="0" y="7.92" font-size="22.3" text-anchor="middle" fill="#000" transform="translate(1876.0,208.0) scale(1,1.05)">30</text>
<text x="0" y="7.92" font-size="22.3" text-anchor="middle" fill="#000" transform="translate(338.0,234.0) scale(1,1.05)">284,3</text>
<text x="0" y="7.92" font-size="22.3" text-anchor="middle" fill="#000" transform="translate(725.0,234.0) scale(1,1.05)">405,7</text>
<text x="0" y="7.92" font-size="22.3" text-anchor="middle" fill="#000" transform="translate(1413.0,234.0) scale(1,1.05)">864,3</text>
<text x="0" y="7.92" font-size="22.3" text-anchor="start" fill="#000" transform="translate(1898.0,227.0) scale(1,1.05)">1674,3 cm</text>
<line x1="160.4" y1="1120.5" x2="1892.0" y2="1120.5" stroke="#333" stroke-width="1.3"/>
<line x1="160.5" y1="1114.5" x2="160.5" y2="1127.0" stroke="#333" stroke-width="1.3"/>
<line x1="191.5" y1="1114.5" x2="191.5" y2="1127.0" stroke="#333" stroke-width="1.3"/>
<line x1="936.5" y1="1114.5" x2="936.5" y2="1127.0" stroke="#333" stroke-width="1.3"/>
<line x1="967.5" y1="1114.5" x2="967.5" y2="1127.0" stroke="#333" stroke-width="1.3"/>
<line x1="1861.5" y1="1114.5" x2="1861.5" y2="1127.0" stroke="#333" stroke-width="1.3"/>
<line x1="1892.5" y1="1114.5" x2="1892.5" y2="1127.0" stroke="#333" stroke-width="1.3"/>
<text x="0" y="7.92" font-size="22.3" text-anchor="middle" fill="#000" transform="translate(176.0,1132.0) scale(1,1.05)">30</text>
<text x="0" y="7.92" font-size="22.3" text-anchor="middle" fill="#000" transform="translate(951.0,1132.0) scale(1,1.05)">30</text>
<text x="0" y="7.92" font-size="22.3" text-anchor="middle" fill="#000" transform="translate(1876.0,1132.0) scale(1,1.05)">30</text>
<text x="0" y="7.92" font-size="22.3" text-anchor="middle" fill="#000" transform="translate(563.0,1107.0) scale(1,1.05)">720</text>
<text x="0" y="7.92" font-size="22.3" text-anchor="middle" fill="#000" transform="translate(1413.0,1107.0) scale(1,1.05)">864,3</text>
<text x="0" y="7.92" font-size="22.3" text-anchor="start" fill="#000" transform="translate(1898.0,1126.0) scale(1,1.05)">1674,3 cm</text>
<line x1="58.5" y1="325.0" x2="58.5" y2="1018.0" stroke="#333" stroke-width="1.3"/>
<line x1="51.0" y1="325.5" x2="65.0" y2="325.5" stroke="#333" stroke-width="1.3"/>
<line x1="51.0" y1="356.5" x2="65.0" y2="356.5" stroke="#333" stroke-width="1.3"/>
<line x1="51.0" y1="552.5" x2="65.0" y2="552.5" stroke="#333" stroke-width="1.3"/>
<line x1="51.0" y1="583.5" x2="65.0" y2="583.5" stroke="#333" stroke-width="1.3"/>
<line x1="51.0" y1="987.5" x2="65.0" y2="987.5" stroke="#333" stroke-width="1.3"/>
<line x1="51.0" y1="1018.5" x2="65.0" y2="1018.5" stroke="#333" stroke-width="1.3"/>
<text x="0" y="7.92" font-size="22.3" text-anchor="middle" fill="#000" transform="translate(44.0,340.0) rotate(-90) scale(1,1.05)">30</text>
<text x="0" y="7.92" font-size="22.3" text-anchor="middle" fill="#000" transform="translate(44.0,567.0) rotate(-90) scale(1,1.05)">30</text>
<text x="0" y="7.92" font-size="22.3" text-anchor="middle" fill="#000" transform="translate(44.0,1002.0) rotate(-90) scale(1,1.05)">30</text>
<text x="0" y="7.92" font-size="22.3" text-anchor="middle" fill="#000" transform="translate(71.0,454.0) rotate(-90) scale(1,1.05)">190</text>
<text x="0" y="7.92" font-size="22.3" text-anchor="middle" fill="#000" transform="translate(71.0,785.0) rotate(-90) scale(1,1.05)">390</text>
<text x="0" y="7.92" font-size="22.3" text-anchor="start" fill="#000" transform="translate(65.0,319.0) rotate(-90) scale(1,1.05)">670 cm</text>
<line x1="1995.5" y1="325.0" x2="1995.5" y2="1018.0" stroke="#333" stroke-width="1.3"/>
<line x1="1988.0" y1="325.5" x2="2002.0" y2="325.5" stroke="#333" stroke-width="1.3"/>
<line x1="1988.0" y1="356.5" x2="2002.0" y2="356.5" stroke="#333" stroke-width="1.3"/>
<line x1="1988.0" y1="987.5" x2="2002.0" y2="987.5" stroke="#333" stroke-width="1.3"/>
<line x1="1988.0" y1="1018.5" x2="2002.0" y2="1018.5" stroke="#333" stroke-width="1.3"/>
<text x="0" y="7.92" font-size="22.3" text-anchor="middle" fill="#000" transform="translate(2008.0,341.0) rotate(-90) scale(1,1.05)">30</text>
<text x="0" y="7.92" font-size="22.3" text-anchor="middle" fill="#000" transform="translate(2008.0,1002.0) rotate(-90) scale(1,1.05)">30</text>
<text x="0" y="7.92" font-size="22.3" text-anchor="middle" fill="#000" transform="translate(1981.0,672.0) rotate(-90) scale(1,1.05)">610</text>
<text x="0" y="7.92" font-size="22.3" text-anchor="start" fill="#000" transform="translate(2002.0,319.0) rotate(-90) scale(1,1.05)">670 cm</text>
<rect x="485.5" y="313.5" width="94.0" height="12.0" fill="#ffff00" stroke="#000" stroke-width="1.0" />
<rect x="579.5" y="313.5" width="247.0" height="12.0" fill="#c0c0c0" stroke="#000" stroke-width="1.0" />
<rect x="826.5" y="313.5" width="249.0" height="12.0" fill="#c0c0c0" stroke="#000" stroke-width="1.0" />
<rect x="1075.5" y="313.5" width="93.0" height="12.0" fill="#ffff00" stroke="#000" stroke-width="1.0" />
<rect x="1168.5" y="313.5" width="10.0" height="12.0" fill="#000080" stroke="#000" stroke-width="1.0" />
<rect x="1178.5" y="313.5" width="124.0" height="12.0" fill="#ff0000" stroke="#000" stroke-width="1.0" />
<rect x="1302.5" y="313.5" width="248.0" height="12.0" fill="#c0c0c0" stroke="#000" stroke-width="1.0" />
<rect x="1550.5" y="313.5" width="248.0" height="12.0" fill="#c0c0c0" stroke="#000" stroke-width="1.0" />
<rect x="1798.5" y="313.5" width="94.0" height="12.0" fill="#ffff00" stroke="#000" stroke-width="1.0" />
<rect x="568.5" y="356.5" width="11.0" height="12.0" fill="#000080" stroke="#000" stroke-width="1.0" />
<rect x="579.5" y="356.5" width="247.0" height="12.0" fill="#c0c0c0" stroke="#000" stroke-width="1.0" />
<rect x="826.5" y="356.5" width="249.0" height="12.0" fill="#c0c0c0" stroke="#000" stroke-width="1.0" />
<rect x="1075.5" y="356.5" width="93.0" height="12.0" fill="#ffff00" stroke="#000" stroke-width="1.0" />
<rect x="1168.5" y="356.5" width="10.0" height="12.0" fill="#000080" stroke="#000" stroke-width="1.0" />
<rect x="1178.5" y="356.5" width="124.0" height="12.0" fill="#ff0000" stroke="#000" stroke-width="1.0" />
<rect x="1302.5" y="356.5" width="248.0" height="12.0" fill="#c0c0c0" stroke="#000" stroke-width="1.0" />
<rect x="1550.5" y="356.5" width="248.0" height="12.0" fill="#c0c0c0" stroke="#000" stroke-width="1.0" />
<rect x="1798.5" y="356.5" width="11.0" height="12.0" fill="#000080" stroke="#000" stroke-width="1.0" />
<path d="M516.5,356.5L568.5,356.5L568.5,368.5L528.5,368.5L528.5,378.5L516.5,378.5Z" fill="#ffff00" stroke="#000" stroke-width="1"/>
<path d="M1809.5,356.5L1861.5,356.5L1861.5,378.5L1848.5,378.5L1848.5,368.5L1809.5,368.5Z" fill="#ffff00" stroke="#000" stroke-width="1"/>
<rect x="473.5" y="313.5" width="12.0" height="61.0" fill="#00ff00" stroke="#000" stroke-width="1.0" />
<rect x="473.5" y="374.5" width="12.0" height="4.0" fill="#000000" stroke="#000" stroke-width="1.0" />
<rect x="473.5" y="378.5" width="12.0" height="122.0" fill="#ff0000" stroke="#000" stroke-width="1.0" />
<rect x="473.5" y="500.5" width="12.0" height="32.0" fill="#0000ff" stroke="#000" stroke-width="1.0" />
<path d="M473.5,532.5L485.5,532.5L485.5,552.5L434.5,552.5L434.5,540.5L473.5,540.5Z" fill="#ffff00" stroke="#000" stroke-width="1"/>
<rect x="516.5" y="378.5" width="12.0" height="122.0" fill="#ff0000" stroke="#000" stroke-width="1.0" />
<rect x="516.5" y="500.5" width="12.0" height="32.0" fill="#0000ff" stroke="#000" stroke-width="1.0" />
<path d="M516.5,532.5L528.5,532.5L528.5,540.5L568.5,540.5L568.5,552.5L516.5,552.5Z" fill="#ffff00" stroke="#000" stroke-width="1"/>
<rect x="160.5" y="540.5" width="93.0" height="12.0" fill="#ffff00" stroke="#000" stroke-width="1.0" />
<rect x="253.5" y="540.5" width="125.0" height="12.0" fill="#ff0000" stroke="#000" stroke-width="1.0" />
<rect x="378.5" y="540.5" width="4.0" height="12.0" fill="#008080" stroke="#000" stroke-width="1.0" />
<rect x="382.5" y="540.5" width="5.0" height="12.0" fill="#008000" stroke="#000" stroke-width="1.0" />
<rect x="387.5" y="540.5" width="47.0" height="12.0" fill="#00ffff" stroke="#000" stroke-width="1.0" />
<rect x="568.5" y="540.5" width="47.0" height="12.0" fill="#00ffff" stroke="#000" stroke-width="1.0" />
<rect x="615.5" y="540.5" width="248.0" height="12.0" fill="#c0c0c0" stroke="#000" stroke-width="1.0" />
<rect x="863.5" y="540.5" width="11.0" height="12.0" fill="#000080" stroke="#000" stroke-width="1.0" />
<rect x="874.5" y="540.5" width="93.0" height="12.0" fill="#ffff00" stroke="#000" stroke-width="1.0" />
<rect x="243.5" y="583.5" width="11.0" height="12.0" fill="#000080" stroke="#000" stroke-width="1.0" />
<rect x="254.5" y="583.5" width="124.0" height="12.0" fill="#ff0000" stroke="#000" stroke-width="1.0" />
<rect x="378.5" y="583.5" width="4.0" height="12.0" fill="#008000" stroke="#000" stroke-width="1.0" />
<rect x="382.5" y="583.5" width="4.0" height="12.0" fill="#008080" stroke="#000" stroke-width="1.0" />
<rect x="386.5" y="583.5" width="48.0" height="12.0" fill="#00ffff" stroke="#000" stroke-width="1.0" />
<rect x="434.5" y="583.5" width="62.0" height="12.0" fill="#00ff00" stroke="#000" stroke-width="1.0" />
<rect x="496.5" y="583.5" width="10.0" height="12.0" fill="#000080" stroke="#000" stroke-width="1.0" />
<rect x="506.5" y="583.5" width="62.0" height="12.0" fill="#00ff00" stroke="#000" stroke-width="1.0" />
<rect x="568.5" y="583.5" width="47.0" height="12.0" fill="#00ffff" stroke="#000" stroke-width="1.0" />
<rect x="615.5" y="583.5" width="248.0" height="12.0" fill="#c0c0c0" stroke="#000" stroke-width="1.0" />
<rect x="863.5" y="583.5" width="11.0" height="12.0" fill="#000080" stroke="#000" stroke-width="1.0" />
<rect x="874.5" y="583.5" width="10.0" height="12.0" fill="#000080" stroke="#000" stroke-width="1.0" />
<path d="M191.5,583.5L243.5,583.5L243.5,595.5L203.5,595.5L203.5,604.5L191.5,604.5Z" fill="#ffff00" stroke="#000" stroke-width="1"/>
<path d="M884.5,583.5L936.5,583.5L936.5,604.5L924.5,604.5L924.5,595.5L884.5,595.5Z" fill="#ffff00" stroke="#000" stroke-width="1"/>
<rect x="148.5" y="540.5" width="12.0" height="63.0" fill="#00ff00" stroke="#000" stroke-width="1.0" />
<rect x="148.5" y="603.5" width="12.0" height="2.0" fill="#000000" stroke="#000" stroke-width="1.0" />
<rect x="148.5" y="605.5" width="12.0" height="246.0" fill="#c0c0c0" stroke="#000" stroke-width="1.0" />
<rect x="148.5" y="851.5" width="12.0" height="47.0" fill="#00ffff" stroke="#000" stroke-width="1.0" />
<rect x="148.5" y="898.5" width="12.0" height="6.0" fill="#008000" stroke="#000" stroke-width="1.0" />
<rect x="148.5" y="904.5" width="12.0" height="62.0" fill="#00ff00" stroke="#000" stroke-width="1.0" />
<rect x="148.5" y="966.5" width="12.0" height="2.0" fill="#000000" stroke="#000" stroke-width="1.0" />
<rect x="148.5" y="968.5" width="12.0" height="62.0" fill="#00ff00" stroke="#000" stroke-width="1.0" />
<rect x="191.5" y="604.5" width="12.0" height="247.0" fill="#c0c0c0" stroke="#000" stroke-width="1.0" />
<rect x="191.5" y="851.5" width="12.0" height="47.0" fill="#00ffff" stroke="#000" stroke-width="1.0" />
<rect x="191.5" y="898.5" width="12.0" height="6.0" fill="#008000" stroke="#000" stroke-width="1.0" />
<rect x="191.5" y="904.5" width="12.0" height="62.0" fill="#00ff00" stroke="#000" stroke-width="1.0" />
<path d="M191.5,966.5L203.5,966.5L203.5,975.5L243.5,975.5L243.5,987.5L191.5,987.5Z" fill="#ffff00" stroke="#000" stroke-width="1"/>
<rect x="243.5" y="975.5" width="11.0" height="12.0" fill="#000080" stroke="#000" stroke-width="1.0" />
<rect x="254.5" y="975.5" width="247.0" height="12.0" fill="#c0c0c0" stroke="#000" stroke-width="1.0" />
<rect x="501.5" y="975.5" width="125.0" height="12.0" fill="#ff0000" stroke="#000" stroke-width="1.0" />
<rect x="626.5" y="975.5" width="10.0" height="12.0" fill="#000080" stroke="#000" stroke-width="1.0" />
<rect x="636.5" y="975.5" width="248.0" height="12.0" fill="#c0c0c0" stroke="#000" stroke-width="1.0" />
<rect x="1019.5" y="975.5" width="248.0" height="12.0" fill="#c0c0c0" stroke="#000" stroke-width="1.0" />
<rect x="1267.5" y="975.5" width="248.0" height="12.0" fill="#c0c0c0" stroke="#000" stroke-width="1.0" />
<rect x="1515.5" y="975.5" width="4.0" height="12.0" fill="#008080" stroke="#000" stroke-width="1.0" />
<rect x="1519.5" y="975.5" width="31.0" height="12.0" fill="#0000ff" stroke="#000" stroke-width="1.0" />
<rect x="1550.5" y="975.5" width="248.0" height="12.0" fill="#c0c0c0" stroke="#000" stroke-width="1.0" />
<rect x="1798.5" y="975.5" width="11.0" height="12.0" fill="#000080" stroke="#000" stroke-width="1.0" />
<path d="M924.5,966.5L936.5,966.5L936.5,987.5L884.5,987.5L884.5,975.5L924.5,975.5Z" fill="#ffff00" stroke="#000" stroke-width="1"/>
<path d="M967.5,966.5L979.5,966.5L979.5,975.5L1019.5,975.5L1019.5,987.5L967.5,987.5Z" fill="#ffff00" stroke="#000" stroke-width="1"/>
<path d="M1848.5,966.5L1861.5,966.5L1861.5,987.5L1809.5,987.5L1809.5,975.5L1848.5,975.5Z" fill="#ffff00" stroke="#000" stroke-width="1"/>
<rect x="160.5" y="1018.5" width="93.0" height="12.0" fill="#ffff00" stroke="#000" stroke-width="1.0" />
<rect x="253.5" y="1018.5" width="248.0" height="12.0" fill="#c0c0c0" stroke="#000" stroke-width="1.0" />
<rect x="501.5" y="1018.5" width="125.0" height="12.0" fill="#ff0000" stroke="#000" stroke-width="1.0" />
<rect x="626.5" y="1018.5" width="10.0" height="12.0" fill="#000080" stroke="#000" stroke-width="1.0" />
<rect x="636.5" y="1018.5" width="248.0" height="12.0" fill="#c0c0c0" stroke="#000" stroke-width="1.0" />
<rect x="884.5" y="1018.5" width="62.0" height="12.0" fill="#00ff00" stroke="#000" stroke-width="1.0" />
<rect x="946.5" y="1018.5" width="11.0" height="12.0" fill="#000080" stroke="#000" stroke-width="1.0" />
<rect x="957.5" y="1018.5" width="62.0" height="12.0" fill="#00ff00" stroke="#000" stroke-width="1.0" />
<rect x="1019.5" y="1018.5" width="248.0" height="12.0" fill="#c0c0c0" stroke="#000" stroke-width="1.0" />
<rect x="1267.5" y="1018.5" width="248.0" height="12.0" fill="#c0c0c0" stroke="#000" stroke-width="1.0" />
<rect x="1515.5" y="1018.5" width="4.0" height="12.0" fill="#008080" stroke="#000" stroke-width="1.0" />
<rect x="1519.5" y="1018.5" width="31.0" height="12.0" fill="#0000ff" stroke="#000" stroke-width="1.0" />
<rect x="1550.5" y="1018.5" width="248.0" height="12.0" fill="#c0c0c0" stroke="#000" stroke-width="1.0" />
<rect x="1798.5" y="1018.5" width="94.0" height="12.0" fill="#ffff00" stroke="#000" stroke-width="1.0" />
<rect x="924.5" y="604.5" width="12.0" height="46.0" fill="#00ffff" stroke="#000" stroke-width="1.0" />
<rect x="924.5" y="650.5" width="12.0" height="6.0" fill="#008000" stroke="#000" stroke-width="1.0" />
<rect x="924.5" y="656.5" width="12.0" height="61.0" fill="#00ff00" stroke="#000" stroke-width="1.0" />
<rect x="924.5" y="717.5" width="12.0" height="249.0" fill="#c0c0c0" stroke="#000" stroke-width="1.0" />
<rect x="967.5" y="540.5" width="12.0" height="62.0" fill="#00ff00" stroke="#000" stroke-width="1.0" />
<rect x="967.5" y="602.5" width="12.0" height="3.0" fill="#000000" stroke="#000" stroke-width="1.0" />
<rect x="967.5" y="605.5" width="12.0" height="45.0" fill="#00ffff" stroke="#000" stroke-width="1.0" />
<rect x="967.5" y="650.5" width="12.0" height="6.0" fill="#008000" stroke="#000" stroke-width="1.0" />
<rect x="967.5" y="656.5" width="12.0" height="61.0" fill="#00ff00" stroke="#000" stroke-width="1.0" />
<rect x="967.5" y="717.5" width="12.0" height="249.0" fill="#c0c0c0" stroke="#000" stroke-width="1.0" />
<rect x="1892.5" y="313.5" width="12.0" height="61.0" fill="#00ff00" stroke="#000" stroke-width="1.0" />
<rect x="1892.5" y="374.5" width="12.0" height="3.0" fill="#000000" stroke="#000" stroke-width="1.0" />
<rect x="1892.5" y="377.5" width="12.0" height="248.0" fill="#c0c0c0" stroke="#000" stroke-width="1.0" />
<rect x="1892.5" y="625.5" width="12.0" height="92.0" fill="#ffff00" stroke="#000" stroke-width="1.0" />
<rect x="1892.5" y="717.5" width="12.0" height="249.0" fill="#c0c0c0" stroke="#000" stroke-width="1.0" />
<rect x="1892.5" y="966.5" width="12.0" height="2.0" fill="#000000" stroke="#000" stroke-width="1.0" />
<rect x="1892.5" y="968.5" width="12.0" height="62.0" fill="#00ff00" stroke="#000" stroke-width="1.0" />
<rect x="1848.5" y="378.5" width="13.0" height="247.0" fill="#c0c0c0" stroke="#000" stroke-width="1.0" />
<rect x="1848.5" y="625.5" width="13.0" height="92.0" fill="#ffff00" stroke="#000" stroke-width="1.0" />
<rect x="1848.5" y="717.5" width="13.0" height="249.0" fill="#c0c0c0" stroke="#000" stroke-width="1.0" />
<rect x="468.5" y="332.5" width="5.0" height="88.0" fill="#ee1111" stroke="#400" stroke-width="0.8" />
<rect x="210.5" y="534.5" width="88.0" height="6.0" fill="#ee1111" stroke="#400" stroke-width="0.8" />
<rect x="143.5" y="922.5" width="5.0" height="87.0" fill="#ee1111" stroke="#400" stroke-width="0.8" />
<rect x="979.5" y="607.5" width="5.0" height="87.0" fill="#ee1111" stroke="#400" stroke-width="0.8" />
<rect x="827.5" y="595.5" width="93.0" height="6.0" fill="#c0c0c0" stroke="#000" stroke-width="1" />
<rect x="900.5" y="1030.5" width="175.0" height="4.0" fill="#c0c0c0" stroke="#000" stroke-width="1" />
<rect x="731.5" y="461.5" width="20.0" height="18.0" fill="#fff" stroke="#000" stroke-width="1.0" />
<rect x="737.5" y="368.5" width="7.0" height="105.0" fill="#fff" stroke="#000" stroke-width="1.0" />
<rect x="734.5" y="402.5" width="13.0" height="18.0" fill="#fff" stroke="#000" stroke-width="1.0" />
<rect x="1178.5" y="461.5" width="20.0" height="18.0" fill="#fff" stroke="#000" stroke-width="1.0" />
<rect x="1185.5" y="368.5" width="6.0" height="105.0" fill="#fff" stroke="#000" stroke-width="1.0" />
<rect x="1182.5" y="402.5" width="12.0" height="18.0" fill="#fff" stroke="#000" stroke-width="1.0" />
<rect x="1626.5" y="461.5" width="20.0" height="18.0" fill="#fff" stroke="#000" stroke-width="1.0" />
<rect x="1632.5" y="368.5" width="7.0" height="105.0" fill="#fff" stroke="#000" stroke-width="1.0" />
<rect x="1629.5" y="402.5" width="13.0" height="18.0" fill="#fff" stroke="#000" stroke-width="1.0" />
<rect x="363.5" y="688.5" width="20.0" height="18.0" fill="#fff" stroke="#000" stroke-width="1.0" />
<rect x="369.5" y="595.5" width="7.0" height="105.0" fill="#fff" stroke="#000" stroke-width="1.0" />
<rect x="366.5" y="629.5" width="13.0" height="18.0" fill="#fff" stroke="#000" stroke-width="1.0" />
<rect x="740.5" y="688.5" width="20.0" height="18.0" fill="#fff" stroke="#000" stroke-width="1.0" />
<rect x="746.5" y="595.5" width="7.0" height="105.0" fill="#fff" stroke="#000" stroke-width="1.0" />
<rect x="743.5" y="629.5" width="13.0" height="18.0" fill="#fff" stroke="#000" stroke-width="1.0" />
<rect x="367.5" y="863.5" width="20.0" height="19.0" fill="#fff" stroke="#000" stroke-width="1.0" />
<rect x="374.5" y="869.5" width="7.0" height="106.0" fill="#fff" stroke="#000" stroke-width="1.0" />
<rect x="371.5" y="921.5" width="13.0" height="19.0" fill="#fff" stroke="#000" stroke-width="1.0" />
<rect x="740.5" y="863.5" width="20.0" height="19.0" fill="#fff" stroke="#000" stroke-width="1.0" />
<rect x="746.5" y="869.5" width="7.0" height="106.0" fill="#fff" stroke="#000" stroke-width="1.0" />
<rect x="743.5" y="921.5" width="13.0" height="19.0" fill="#fff" stroke="#000" stroke-width="1.0" />
<rect x="1180.5" y="863.5" width="20.0" height="19.0" fill="#fff" stroke="#000" stroke-width="1.0" />
<rect x="1186.5" y="869.5" width="7.0" height="106.0" fill="#fff" stroke="#000" stroke-width="1.0" />
<rect x="1183.5" y="921.5" width="13.0" height="19.0" fill="#fff" stroke="#000" stroke-width="1.0" />
<rect x="1627.5" y="863.5" width="20.0" height="19.0" fill="#fff" stroke="#000" stroke-width="1.0" />
<rect x="1633.5" y="869.5" width="7.0" height="106.0" fill="#fff" stroke="#000" stroke-width="1.0" />
<rect x="1630.5" y="921.5" width="13.0" height="19.0" fill="#fff" stroke="#000" stroke-width="1.0" />
<rect x="296.5" y="775.5" width="19.0" height="19.0" fill="#fff" stroke="#000" stroke-width="1.0" />
<rect x="203.5" y="781.5" width="106.0" height="7.0" fill="#fff" stroke="#000" stroke-width="1.0" />
<rect x="237.5" y="778.5" width="19.0" height="13.0" fill="#fff" stroke="#000" stroke-width="1.0" />
<rect x="812.5" y="775.5" width="19.0" height="19.0" fill="#fff" stroke="#000" stroke-width="1.0" />
<rect x="818.5" y="781.5" width="106.0" height="7.0" fill="#fff" stroke="#000" stroke-width="1.0" />
<rect x="871.5" y="778.5" width="19.0" height="13.0" fill="#fff" stroke="#000" stroke-width="1.0" />
<rect x="1736.5" y="504.5" width="19.0" height="19.0" fill="#fff" stroke="#000" stroke-width="1.0" />
<rect x="1742.5" y="510.5" width="106.0" height="7.0" fill="#fff" stroke="#000" stroke-width="1.0" />
<rect x="1795.5" y="507.5" width="19.0" height="13.0" fill="#fff" stroke="#000" stroke-width="1.0" />
<rect x="1736.5" y="819.5" width="19.0" height="19.0" fill="#fff" stroke="#000" stroke-width="1.0" />
<rect x="1742.5" y="825.5" width="106.0" height="7.0" fill="#fff" stroke="#000" stroke-width="1.0" />
<rect x="1795.5" y="822.5" width="19.0" height="13.0" fill="#fff" stroke="#000" stroke-width="1.0" />
<rect x="528.5" y="385.5" width="126.0" height="4.0" fill="#ee1111" stroke="#400" stroke-width="0.8" />
<rect x="528.5" y="452.5" width="126.0" height="5.0" fill="#ee1111" stroke="#400" stroke-width="0.8" />
<rect x="529.5" y="457.5" width="5.0" height="87.0" fill="#ee1111" stroke="#400" stroke-width="0.8" />
<rect x="534.5" y="518.5" width="119.0" height="6.0" fill="#ee1111" stroke="#400" stroke-width="0.8" />
<rect x="666.5" y="368.5" width="5.0" height="124.0" fill="#ee1111" stroke="#400" stroke-width="0.8" />
<rect x="782.5" y="368.5" width="5.0" height="124.0" fill="#ee1111" stroke="#400" stroke-width="0.8" />
<rect x="898.5" y="368.5" width="6.0" height="124.0" fill="#ee1111" stroke="#400" stroke-width="0.8" />
<rect x="1015.5" y="368.5" width="5.0" height="124.0" fill="#ee1111" stroke="#400" stroke-width="0.8" />
<rect x="1131.5" y="368.5" width="5.0" height="124.0" fill="#ee1111" stroke="#400" stroke-width="0.8" />
<rect x="1248.5" y="368.5" width="5.0" height="124.0" fill="#ee1111" stroke="#400" stroke-width="0.8" />
<rect x="1364.5" y="368.5" width="5.0" height="124.0" fill="#ee1111" stroke="#400" stroke-width="0.8" />
<rect x="1480.5" y="368.5" width="6.0" height="124.0" fill="#ee1111" stroke="#400" stroke-width="0.8" />
<rect x="1597.5" y="368.5" width="5.0" height="124.0" fill="#ee1111" stroke="#400" stroke-width="0.8" />
<rect x="1713.5" y="368.5" width="5.0" height="124.0" fill="#ee1111" stroke="#400" stroke-width="0.8" />
<rect x="1829.5" y="368.5" width="6.0" height="124.0" fill="#ee1111" stroke="#400" stroke-width="0.8" />
<rect x="1134.5" y="368.5" width="88.0" height="5.0" fill="#ee1111" stroke="#400" stroke-width="0.8" />
<rect x="1723.5" y="505.5" width="125.0" height="6.0" fill="#ee1111" stroke="#400" stroke-width="0.8" />
<rect x="1723.5" y="611.5" width="125.0" height="6.0" fill="#ee1111" stroke="#400" stroke-width="0.8" />
<rect x="1723.5" y="730.5" width="125.0" height="6.0" fill="#ee1111" stroke="#400" stroke-width="0.8" />
<rect x="1723.5" y="843.5" width="125.0" height="5.0" fill="#ee1111" stroke="#400" stroke-width="0.8" />
<rect x="1723.5" y="953.5" width="125.0" height="4.0" fill="#ee1111" stroke="#400" stroke-width="0.8" />
<rect x="341.5" y="850.5" width="5.0" height="125.0" fill="#ee1111" stroke="#400" stroke-width="0.8" />
<rect x="451.5" y="850.5" width="5.0" height="125.0" fill="#ee1111" stroke="#400" stroke-width="0.8" />
<rect x="561.5" y="850.5" width="5.0" height="125.0" fill="#ee1111" stroke="#400" stroke-width="0.8" />
<rect x="671.5" y="850.5" width="5.0" height="125.0" fill="#ee1111" stroke="#400" stroke-width="0.8" />
<rect x="781.5" y="850.5" width="6.0" height="125.0" fill="#ee1111" stroke="#400" stroke-width="0.8" />
<rect x="992.5" y="850.5" width="6.0" height="125.0" fill="#ee1111" stroke="#400" stroke-width="0.8" />
<rect x="1111.5" y="850.5" width="5.0" height="125.0" fill="#ee1111" stroke="#400" stroke-width="0.8" />
<rect x="1230.5" y="850.5" width="5.0" height="125.0" fill="#ee1111" stroke="#400" stroke-width="0.8" />
<rect x="1349.5" y="850.5" width="5.0" height="125.0" fill="#ee1111" stroke="#400" stroke-width="0.8" />
<rect x="1467.5" y="850.5" width="6.0" height="125.0" fill="#ee1111" stroke="#400" stroke-width="0.8" />
<rect x="1587.5" y="850.5" width="5.0" height="125.0" fill="#ee1111" stroke="#400" stroke-width="0.8" />
<rect x="1705.5" y="850.5" width="6.0" height="125.0" fill="#ee1111" stroke="#400" stroke-width="0.8" />
<rect x="203.5" y="854.5" width="6.0" height="88.0" fill="#ee1111" stroke="#400" stroke-width="0.8" />
<rect x="341.5" y="595.5" width="5.0" height="125.0" fill="#ee1111" stroke="#400" stroke-width="0.8" />
<rect x="455.5" y="595.5" width="5.0" height="125.0" fill="#ee1111" stroke="#400" stroke-width="0.8" />
<rect x="576.5" y="595.5" width="6.0" height="125.0" fill="#ee1111" stroke="#400" stroke-width="0.8" />
<rect x="680.5" y="595.5" width="5.0" height="125.0" fill="#ee1111" stroke="#400" stroke-width="0.8" />
<rect x="792.5" y="595.5" width="6.0" height="125.0" fill="#ee1111" stroke="#400" stroke-width="0.8" />
<rect x="905.5" y="595.5" width="6.0" height="125.0" fill="#ee1111" stroke="#400" stroke-width="0.8" />
<rect x="210.5" y="596.5" width="88.0" height="5.0" fill="#ee1111" stroke="#400" stroke-width="0.8" />
<rect x="453.5" y="597.5" width="87.0" height="4.0" fill="#ee1111" stroke="#400" stroke-width="0.8" />
<rect x="203.5" y="612.5" width="125.0" height="5.0" fill="#ee1111" stroke="#400" stroke-width="0.8" />
<rect x="203.5" y="724.5" width="125.0" height="5.0" fill="#ee1111" stroke="#400" stroke-width="0.8" />
<rect x="203.5" y="839.5" width="125.0" height="5.0" fill="#ee1111" stroke="#400" stroke-width="0.8" />
<rect x="203.5" y="953.5" width="125.0" height="4.0" fill="#ee1111" stroke="#400" stroke-width="0.8" />
<rect x="799.5" y="732.5" width="125.0" height="6.0" fill="#ee1111" stroke="#400" stroke-width="0.8" />
<rect x="799.5" y="844.5" width="125.0" height="5.0" fill="#ee1111" stroke="#400" stroke-width="0.8" />
<rect x="799.5" y="953.5" width="125.0" height="4.0" fill="#ee1111" stroke="#400" stroke-width="0.8" />
<line x1="634.5" y1="325.0" x2="634.5" y2="379.4" stroke="#000" stroke-width="1.0"/>
<line x1="771.5" y1="325.0" x2="771.5" y2="379.4" stroke="#000" stroke-width="1.0"/>
<line x1="882.5" y1="325.0" x2="882.5" y2="379.4" stroke="#000" stroke-width="1.0"/>
<line x1="1019.5" y1="325.0" x2="1019.5" y2="379.4" stroke="#000" stroke-width="1.0"/>
<line x1="1122.5" y1="325.0" x2="1122.5" y2="379.4" stroke="#000" stroke-width="1.0"/>
<line x1="1240.5" y1="325.0" x2="1240.5" y2="379.4" stroke="#000" stroke-width="1.0"/>
<line x1="1358.5" y1="325.0" x2="1358.5" y2="379.4" stroke="#000" stroke-width="1.0"/>
<line x1="1494.5" y1="325.0" x2="1494.5" y2="379.4" stroke="#000" stroke-width="1.0"/>
<line x1="1606.5" y1="325.0" x2="1606.5" y2="379.4" stroke="#000" stroke-width="1.0"/>
<line x1="1743.5" y1="325.0" x2="1743.5" y2="379.4" stroke="#000" stroke-width="1.0"/>
<line x1="485.1" y1="438.5" x2="540.0" y2="438.5" stroke="#000" stroke-width="1.0"/>
<line x1="485.1" y1="516.5" x2="540.0" y2="516.5" stroke="#000" stroke-width="1.0"/>
<line x1="316.5" y1="552.6" x2="316.5" y2="606.7" stroke="#000" stroke-width="1.0"/>
<line x1="411.5" y1="552.6" x2="411.5" y2="606.7" stroke="#000" stroke-width="1.0"/>
<line x1="465.5" y1="552.6" x2="465.5" y2="606.7" stroke="#000" stroke-width="1.0"/>
<line x1="592.5" y1="552.6" x2="592.5" y2="606.7" stroke="#000" stroke-width="1.0"/>
<line x1="671.5" y1="552.6" x2="671.5" y2="606.7" stroke="#000" stroke-width="1.0"/>
<line x1="808.5" y1="552.6" x2="808.5" y2="606.7" stroke="#000" stroke-width="1.0"/>
<line x1="536.5" y1="530.0" x2="536.5" y2="583.6" stroke="#000" stroke-width="1.0"/>
<line x1="160.4" y1="659.5" x2="214.8" y2="659.5" stroke="#000" stroke-width="1.0"/>
<line x1="160.4" y1="796.5" x2="214.8" y2="796.5" stroke="#000" stroke-width="1.0"/>
<line x1="160.4" y1="875.5" x2="214.8" y2="875.5" stroke="#000" stroke-width="1.0"/>
<line x1="160.4" y1="935.5" x2="214.8" y2="935.5" stroke="#000" stroke-width="1.0"/>
<line x1="309.5" y1="964.0" x2="309.5" y2="1018.0" stroke="#000" stroke-width="1.0"/>
<line x1="446.5" y1="964.0" x2="446.5" y2="1018.0" stroke="#000" stroke-width="1.0"/>
<line x1="564.5" y1="964.0" x2="564.5" y2="1018.0" stroke="#000" stroke-width="1.0"/>
<line x1="692.5" y1="964.0" x2="692.5" y2="1018.0" stroke="#000" stroke-width="1.0"/>
<line x1="828.5" y1="964.0" x2="828.5" y2="1018.0" stroke="#000" stroke-width="1.0"/>
<line x1="915.5" y1="964.0" x2="915.5" y2="1018.0" stroke="#000" stroke-width="1.0"/>
<line x1="1074.5" y1="964.0" x2="1074.5" y2="1018.0" stroke="#000" stroke-width="1.0"/>
<line x1="1211.5" y1="964.0" x2="1211.5" y2="1018.0" stroke="#000" stroke-width="1.0"/>
<line x1="1322.5" y1="964.0" x2="1322.5" y2="1018.0" stroke="#000" stroke-width="1.0"/>
<line x1="1459.5" y1="964.0" x2="1459.5" y2="1018.0" stroke="#000" stroke-width="1.0"/>
<line x1="1534.5" y1="964.0" x2="1534.5" y2="1018.0" stroke="#000" stroke-width="1.0"/>
<line x1="1606.5" y1="964.0" x2="1606.5" y2="1018.0" stroke="#000" stroke-width="1.0"/>
<line x1="1743.5" y1="964.0" x2="1743.5" y2="1018.0" stroke="#000" stroke-width="1.0"/>
<line x1="1008.5" y1="987.0" x2="1008.5" y2="1040.0" stroke="#000" stroke-width="1.0"/>
<line x1="913.0" y1="627.5" x2="967.0" y2="627.5" stroke="#000" stroke-width="1.0"/>
<line x1="913.0" y1="687.5" x2="967.0" y2="687.5" stroke="#000" stroke-width="1.0"/>
<line x1="913.0" y1="774.5" x2="967.0" y2="774.5" stroke="#000" stroke-width="1.0"/>
<line x1="913.0" y1="909.5" x2="967.0" y2="909.5" stroke="#000" stroke-width="1.0"/>
<line x1="1838.0" y1="432.5" x2="1892.0" y2="432.5" stroke="#000" stroke-width="1.0"/>
<line x1="1838.0" y1="569.5" x2="1892.0" y2="569.5" stroke="#000" stroke-width="1.0"/>
<line x1="1838.0" y1="671.5" x2="1892.0" y2="671.5" stroke="#000" stroke-width="1.0"/>
<line x1="1838.0" y1="774.5" x2="1892.0" y2="774.5" stroke="#000" stroke-width="1.0"/>
<line x1="1838.0" y1="909.5" x2="1892.0" y2="909.5" stroke="#000" stroke-width="1.0"/>
<text x="0" y="8.52" font-size="24" text-anchor="middle" fill="#000" transform="translate(702.0,343.0) scale(1,1.06)">240</text>
<text x="0" y="8.52" font-size="24" text-anchor="middle" fill="#000" transform="translate(950.0,343.0) scale(1,1.06)">240</text>
<text x="0" y="8.52" font-size="24" text-anchor="middle" fill="#000" transform="translate(1121.0,343.0) scale(1,1.06)">90</text>
<text x="0" y="8.52" font-size="24" text-anchor="middle" fill="#000" transform="translate(1240.0,343.0) scale(1,1.06)">120</text>
<text x="0" y="8.52" font-size="24" text-anchor="middle" fill="#000" transform="translate(1425.0,343.0) scale(1,1.06)">240</text>
<text x="0" y="8.52" font-size="24" text-anchor="middle" fill="#000" transform="translate(1673.0,343.0) scale(1,1.06)">240</text>
<text x="0" y="8.52" font-size="24" text-anchor="middle" fill="#000" transform="translate(316.0,572.0) scale(1,1.06)">120</text>
<text x="0" y="8.52" font-size="24" text-anchor="middle" fill="#000" transform="translate(411.0,572.0) scale(1,1.06)">45</text>
<text x="0" y="8.52" font-size="24" text-anchor="middle" fill="#000" transform="translate(592.0,572.0) scale(1,1.06)">45</text>
<text x="0" y="8.52" font-size="24" text-anchor="middle" fill="#000" transform="translate(740.0,572.0) scale(1,1.06)">240</text>
<text x="0" y="8.52" font-size="24" text-anchor="middle" fill="#000" transform="translate(378.0,1005.0) scale(1,1.06)">240</text>
<text x="0" y="8.52" font-size="24" text-anchor="middle" fill="#000" transform="translate(564.0,1005.0) scale(1,1.06)">120</text>
<text x="0" y="8.52" font-size="24" text-anchor="middle" fill="#000" transform="translate(760.0,1005.0) scale(1,1.06)">240</text>
<text x="0" y="8.52" font-size="24" text-anchor="middle" fill="#000" transform="translate(1141.0,1005.0) scale(1,1.06)">240</text>
<text x="0" y="8.52" font-size="24" text-anchor="middle" fill="#000" transform="translate(1390.0,1005.0) scale(1,1.06)">240</text>
<text x="0" y="8.52" font-size="24" text-anchor="middle" fill="#000" transform="translate(1534.0,1005.0) scale(1,1.06)">30</text>
<text x="0" y="8.52" font-size="24" text-anchor="middle" fill="#000" transform="translate(1673.0,1005.0) scale(1,1.06)">240</text>
<text x="0" y="8.52" font-size="24" text-anchor="middle" fill="#000" transform="translate(506.0,438.0) rotate(-90) scale(1,1.06)">120</text>
<text x="0" y="8.52" font-size="24" text-anchor="middle" fill="#000" transform="translate(506.0,515.0) rotate(-90) scale(1,1.06)">30</text>
<text x="0" y="8.52" font-size="24" text-anchor="middle" fill="#000" transform="translate(180.0,728.0) rotate(-90) scale(1,1.06)">240</text>
<text x="0" y="8.52" font-size="24" text-anchor="middle" fill="#000" transform="translate(180.0,875.0) rotate(-90) scale(1,1.06)">45</text>
<text x="0" y="8.52" font-size="24" text-anchor="middle" fill="#000" transform="translate(180.0,935.0) rotate(-90) scale(1,1.06)">60</text>
<text x="0" y="8.52" font-size="24" text-anchor="middle" fill="#000" transform="translate(955.0,627.0) rotate(-90) scale(1,1.06)">45</text>
<text x="0" y="8.52" font-size="24" text-anchor="middle" fill="#000" transform="translate(955.0,687.0) rotate(-90) scale(1,1.06)">60</text>
<text x="0" y="8.52" font-size="24" text-anchor="middle" fill="#000" transform="translate(955.0,840.0) rotate(-90) scale(1,1.06)">240</text>
<text x="0" y="8.52" font-size="24" text-anchor="middle" fill="#000" transform="translate(1880.0,500.0) rotate(-90) scale(1,1.06)">240</text>
<text x="0" y="8.52" font-size="24" text-anchor="middle" fill="#000" transform="translate(1880.0,671.0) rotate(-90) scale(1,1.06)">90</text>
<text x="0" y="8.52" font-size="24" text-anchor="middle" fill="#000" transform="translate(1880.0,840.0) rotate(-90) scale(1,1.06)">240</text>
<text x="0" y="6.64" font-size="18.7" text-anchor="middle" fill="#000" transform="translate(531.0,299.0) scale(1,1.05)">90</text>
<text x="0" y="6.64" font-size="18.7" text-anchor="middle" fill="#000" transform="translate(1844.0,299.0) scale(1,1.05)">90</text>
<text x="0" y="6.64" font-size="18.7" text-anchor="middle" fill="#000" transform="translate(207.0,526.0) scale(1,1.05)">90</text>
<text x="0" y="6.64" font-size="18.7" text-anchor="middle" fill="#000" transform="translate(919.0,526.0) scale(1,1.05)">90</text>
<text x="0" y="6.64" font-size="18.7" text-anchor="middle" fill="#000" transform="translate(464.0,613.0) scale(1,1.05)">60</text>
<text x="0" y="6.64" font-size="18.7" text-anchor="middle" fill="#000" transform="translate(537.0,613.0) scale(1,1.05)">60</text>
<text x="0" y="6.64" font-size="18.7" text-anchor="middle" fill="#000" transform="translate(207.0,1047.0) scale(1,1.05)">90</text>
<text x="0" y="6.64" font-size="18.7" text-anchor="middle" fill="#000" transform="translate(915.0,1047.0) scale(1,1.05)">60</text>
<text x="0" y="6.64" font-size="18.7" text-anchor="middle" fill="#000" transform="translate(987.0,1047.0) scale(1,1.05)">60</text>
<text x="0" y="6.64" font-size="18.7" text-anchor="middle" fill="#000" transform="translate(1844.0,1047.0) scale(1,1.05)">90</text>
<text x="0" y="6.64" font-size="18.7" text-anchor="middle" fill="#000" transform="translate(460.0,344.0) rotate(-90) scale(1,1.05)">60</text>
<text x="0" y="6.64" font-size="18.7" text-anchor="middle" fill="#000" transform="translate(135.0,570.0) rotate(-90) scale(1,1.05)">60</text>
<text x="0" y="6.64" font-size="18.7" text-anchor="middle" fill="#000" transform="translate(135.0,998.0) rotate(-90) scale(1,1.05)">60</text>
<text x="0" y="6.64" font-size="18.7" text-anchor="middle" fill="#000" transform="translate(997.0,570.0) rotate(-90) scale(1,1.05)">60</text>
<text x="0" y="6.64" font-size="18.7" text-anchor="middle" fill="#000" transform="translate(1921.0,344.0) rotate(-90) scale(1,1.05)">60</text>
<text x="0" y="6.64" font-size="18.7" text-anchor="middle" fill="#000" transform="translate(1921.0,998.0) rotate(-90) scale(1,1.05)">60</text>
<text x="0" y="4.62" font-size="13" text-anchor="middle" fill="#000" transform="translate(1173.0,292.0)">10</text>
<text x="0" y="4.62" font-size="13" text-anchor="middle" fill="#000" transform="translate(1173.0,392.0)">10</text>
<text x="0" y="4.62" font-size="13" text-anchor="middle" fill="#000" transform="translate(574.0,392.0)">10</text>
<text x="0" y="4.62" font-size="13" text-anchor="middle" fill="#000" transform="translate(1803.0,392.0)">10</text>
<text x="0" y="4.62" font-size="13" text-anchor="middle" fill="#000" transform="translate(869.0,520.0)">10</text>
<text x="0" y="4.62" font-size="13" text-anchor="middle" fill="#000" transform="translate(379.0,519.0)">4</text>
<text x="0" y="4.62" font-size="13" text-anchor="middle" fill="#000" transform="translate(384.0,528.0)">5</text>
<text x="0" y="4.62" font-size="13" text-anchor="middle" fill="#000" transform="translate(501.0,619.0)">10</text>
<text x="0" y="4.62" font-size="13" text-anchor="middle" fill="#000" transform="translate(616.0,519.0)">0,7</text>
<text x="0" y="4.62" font-size="13" text-anchor="middle" fill="#000" transform="translate(615.0,619.0)">0,7</text>
<text x="0" y="4.62" font-size="13" text-anchor="middle" fill="#000" transform="translate(249.0,619.0)">10</text>
<text x="0" y="4.62" font-size="13" text-anchor="middle" fill="#000" transform="translate(380.0,610.0)">5</text>
<text x="0" y="4.62" font-size="13" text-anchor="middle" fill="#000" transform="translate(384.0,619.0)">4</text>
<text x="0" y="4.62" font-size="13" text-anchor="middle" fill="#000" transform="translate(869.0,609.0)">10</text>
<text x="0" y="4.62" font-size="13" text-anchor="middle" fill="#000" transform="translate(880.0,619.0)">10</text>
<text x="0" y="4.62" font-size="13" text-anchor="middle" fill="#000" transform="translate(249.0,953.0)">10</text>
<text x="0" y="4.62" font-size="13" text-anchor="middle" fill="#000" transform="translate(631.0,953.0)">10</text>
<text x="0" y="4.62" font-size="13" text-anchor="middle" fill="#000" transform="translate(631.0,1053.0)">10</text>
<text x="0" y="4.62" font-size="13" text-anchor="middle" fill="#000" transform="translate(951.0,1053.0)">10</text>
<text x="0" y="4.62" font-size="13" text-anchor="middle" fill="#000" transform="translate(1516.0,953.0)">4</text>
<text x="0" y="4.62" font-size="13" text-anchor="middle" fill="#000" transform="translate(1516.0,1053.0)">4</text>
<text x="0" y="4.62" font-size="13" text-anchor="middle" fill="#000" transform="translate(1803.0,953.0)">10</text>
<text x="0" y="4.62" font-size="13" text-anchor="middle" fill="#000" transform="translate(453.0,377.0) rotate(-90)">2</text>
<text x="0" y="4.62" font-size="13" text-anchor="middle" fill="#000" transform="translate(128.0,603.0) rotate(-90)">2</text>
<text x="0" y="4.62" font-size="13" text-anchor="middle" fill="#000" transform="translate(128.0,901.0) rotate(-90)">5</text>
<text x="0" y="4.62" font-size="13" text-anchor="middle" fill="#000" transform="translate(228.0,901.0) rotate(-90)">5</text>
<text x="0" y="4.62" font-size="13" text-anchor="middle" fill="#000" transform="translate(128.0,967.0) rotate(-90)">2</text>
<text x="0" y="4.62" font-size="13" text-anchor="middle" fill="#000" transform="translate(902.0,653.0) rotate(-90)">5</text>
<text x="0" y="4.62" font-size="13" text-anchor="middle" fill="#000" transform="translate(1003.0,603.0) rotate(-90)">2</text>
<text x="0" y="4.62" font-size="13" text-anchor="middle" fill="#000" transform="translate(1003.0,653.0) rotate(-90)">5</text>
<text x="0" y="4.62" font-size="13" text-anchor="middle" fill="#000" transform="translate(1928.0,377.0) rotate(-90)">2</text>
<text x="0" y="4.62" font-size="13" text-anchor="middle" fill="#000" transform="translate(1928.0,967.0) rotate(-90)">2</text>
<text x="0" y="4.01" font-size="11.3" text-anchor="middle" fill="#000" transform="translate(551.0,363.0) scale(1,1.02)">50</text>
<text x="0" y="4.01" font-size="11.3" text-anchor="middle" fill="#000" transform="translate(451.0,547.0) scale(1,1.02)">50</text>
<text x="0" y="4.01" font-size="11.3" text-anchor="middle" fill="#000" transform="translate(551.0,547.0) scale(1,1.02)">50</text>
<text x="0" y="4.01" font-size="11.3" text-anchor="middle" fill="#000" transform="translate(226.0,590.0) scale(1,1.02)">50</text>
<text x="0" y="4.01" font-size="11.3" text-anchor="middle" fill="#000" transform="translate(901.0,590.0) scale(1,1.02)">50</text>
<text x="0" y="4.01" font-size="11.3" text-anchor="middle" fill="#000" transform="translate(226.0,981.0) scale(1,1.02)">50</text>
<text x="0" y="4.01" font-size="11.3" text-anchor="middle" fill="#000" transform="translate(901.0,981.0) scale(1,1.02)">50</text>
<text x="0" y="4.01" font-size="11.3" text-anchor="middle" fill="#000" transform="translate(1001.0,981.0) scale(1,1.02)">50</text>
<text x="0" y="4.01" font-size="11.3" text-anchor="middle" fill="#000" transform="translate(1826.0,363.0) scale(1,1.02)">50</text>
<text x="0" y="4.01" font-size="11.3" text-anchor="middle" fill="#000" transform="translate(1826.0,981.0) scale(1,1.02)">50</text>
<text x="0" y="3.90" font-size="11" text-anchor="middle" fill="#000" transform="translate(523.5,369.0) rotate(-90)">20</text>
<text x="0" y="3.90" font-size="11" text-anchor="middle" fill="#000" transform="translate(479.5,538.5) rotate(-90)">20</text>
<text x="0" y="3.90" font-size="11" text-anchor="middle" fill="#000" transform="translate(523.5,538.5) rotate(-90)">20</text>
<text x="0" y="3.90" font-size="11" text-anchor="middle" fill="#000" transform="translate(199.5,597.0) rotate(-90)">20</text>
<text x="0" y="3.90" font-size="11" text-anchor="middle" fill="#000" transform="translate(930.5,598.0) rotate(-90)">20</text>
<text x="0" y="3.90" font-size="11" text-anchor="middle" fill="#000" transform="translate(199.5,973.0) rotate(-90)">20</text>
<text x="0" y="3.90" font-size="11" text-anchor="middle" fill="#000" transform="translate(930.5,972.5) rotate(-90)">20</text>
<text x="0" y="3.90" font-size="11" text-anchor="middle" fill="#000" transform="translate(973.5,972.5) rotate(-90)">20</text>
<text x="0" y="3.90" font-size="11" text-anchor="middle" fill="#000" transform="translate(1855.0,370.0) rotate(-90)">20</text>
<text x="0" y="3.90" font-size="11" text-anchor="middle" fill="#000" transform="translate(1855.5,973.0) rotate(-90)">20</text>
</g>
</svg>
</body></html>
